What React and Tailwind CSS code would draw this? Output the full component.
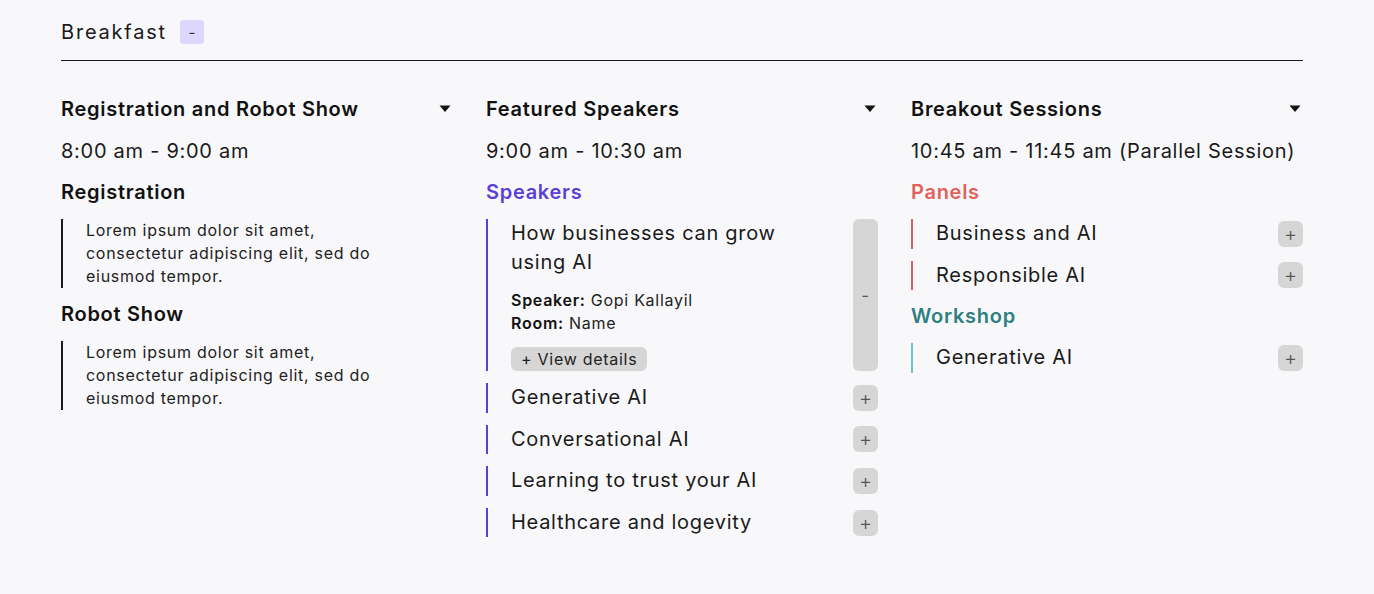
import React, { useState } from 'react'

const FONT = { fontFamily: 'Inter, "Noto Sans", sans-serif', letterSpacing: '0.045em' }

const Caret = () => (
  <svg width="12" height="8" viewBox="0 0 12 8" className="shrink-0">
    <path d="M0.5 0.5h11L6 7z" fill="#111" />
  </svg>
)

const Lorem = () => (
  <div className="border-l-2 border-[#1a1a1a] pl-[23px] text-[16px] leading-[23px] text-[#222]">
    Lorem ipsum dolor sit amet,<br />consectetur adipiscing elit, sed do<br />eiusmod tempor.
  </div>
)

const PlusBtn = ({ label = '+' }) => (
  <button className="w-[25px] h-[26px] rounded-md bg-[#d6d6d6] text-[#555] text-[20px] font-light leading-none flex items-center justify-center shrink-0 tracking-normal">
    {label}
  </button>
)

const Item = ({ title, bar }) => (
  <div className={`flex items-center justify-between border-l-2 ${bar} pl-[23px]`}>
    <p className="text-[20px] leading-[29.6px] text-[#1a1a1a]">{title}</p>
    <PlusBtn />
  </div>
)

const ColHead = ({ title, time }) => (
  <>
    <div className="flex items-center justify-between pr-[2px]">
      <h2 className="text-[20px] leading-[30px] font-semibold text-[#111]">{title}</h2>
      <Caret />
    </div>
    <p className="text-[20px] leading-[30px] text-[#1a1a1a]">{time}</p>
  </>
)

export default function App() {
  const [open, setOpen] = useState(true)
  return (
    <div className="min-h-screen bg-[#f8f8fa] pl-[61px] pr-[71px] pt-[18px] pb-10" style={FONT}>
      <div className="flex items-center gap-[13px] pb-[14px] border-b border-[#1a1a1a]">
        <span className="text-[20px] leading-[28px] tracking-[0.09em] text-[#1a1a1a]">Breakfast</span>
        <button onClick={() => setOpen(!open)} className="w-6 h-6 rounded-[4px] bg-[#ddd6fe] text-[#333] text-[15px] leading-none flex items-center justify-center tracking-normal">
          -
        </button>
      </div>

      {open && (
        <div className="grid grid-cols-3 gap-[33px] pt-[33px]">
          {/* Column 1 */}
          <div className="flex flex-col gap-[12px]">
            <ColHead title="Registration and Robot Show" time="8:00 am - 9:00 am" />
            <h3 className="text-[20px] leading-[29px] font-semibold text-[#111]">Registration</h3>
            <Lorem />
            <h3 className="text-[20px] leading-[29px] font-semibold text-[#111]">Robot Show</h3>
            <Lorem />
          </div>

          {/* Column 2 */}
          <div className="flex flex-col gap-[12px]">
            <ColHead title="Featured Speakers" time="9:00 am - 10:30 am" />
            <h3 className="text-[20px] leading-[29px] font-semibold text-[#5b3fd6]">Speakers</h3>
            <div className="flex justify-between border-l-2 border-[#5b3fd6] pl-[23px]">
              <div className="flex flex-col">
                <p className="text-[20px] leading-[29px] text-[#1a1a1a] w-[300px]">How businesses can grow using AI</p>
                <div className="mt-[12px] text-[16px] leading-[23px] text-[#222]">
                  <p><span className="font-semibold text-[#111]">Speaker:</span> Gopi Kallayil</p>
                  <p><span className="font-semibold text-[#111]">Room:</span> Name</p>
                </div>
                <button className="mt-[12px] self-start h-6 px-[10px] rounded-md bg-[#d6d6d6] text-[16px] leading-none text-[#222]">
                  + View details
                </button>
              </div>
              <button className="w-[25px] rounded-md bg-[#d6d6d6] text-[#555] text-[16px] flex items-center justify-center shrink-0">
                -
              </button>
            </div>
            {['Generative AI', 'Conversational AI', 'Learning to trust your AI', 'Healthcare and logevity'].map(t => (
              <Item key={t} title={t} bar="border-[#5b3fd6]" />
            ))}
          </div>

          {/* Column 3 */}
          <div className="flex flex-col gap-[12px]">
            <ColHead title="Breakout Sessions" time="10:45 am - 11:45 am (Parallel Session)" />
            <h3 className="text-[20px] leading-[29px] font-semibold text-[#e0625a]">Panels</h3>
            <Item title="Business and AI" bar="border-[#d9605a]" />
            <Item title="Responsible AI" bar="border-[#d9605a]" />
            <h3 className="text-[20px] leading-[29px] font-semibold text-[#2e7f7f]">Workshop</h3>
            <Item title="Generative AI" bar="border-[#6cc6c6]" />
          </div>
        </div>
      )}
    </div>
  )
}
